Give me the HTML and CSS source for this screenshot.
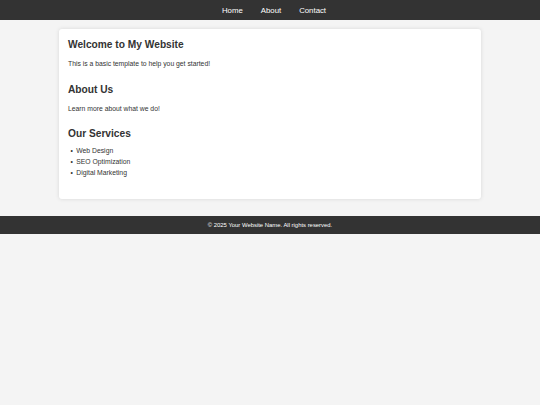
FILE: index.html
```html
<!DOCTYPE html>
<html lang="en">
<head>
    <meta charset="UTF-8">
    <meta name="viewport" content="width=device-width, initial-scale=1.0">
    <title>My Website</title>
    <link rel="stylesheet" href="styles.css">
</head>
<body>

    <header class="topbar">
        <nav class="nav">
            <a href="#">Home</a>
            <a href="#">About</a>
            <a href="#">Contact</a>
        </nav>
    </header>

    <main class="container">
        <section class="card">
            <h2>Welcome to My Website</h2>
            <p>This is a basic template to help you get started!</p>

            <h2>About Us</h2>
            <p>Learn more about what we do!</p>

            <h2>Our Services</h2>
            <ul>
                <li>Web Design</li>
                <li>SEO Optimization</li>
                <li>Digital Marketing</li>
            </ul>
        </section>
    </main>

    <footer class="footer">
        &copy; 2025 Your Website Name. All rights reserved.
    </footer>

</body>
</html>
```

FILE: styles.css
```css
body {
    font-family: 'Liberation Sans', Arial, sans-serif;
    margin: 0;
    padding: 0;
    background-color: #f4f4f4;
    color: #333;
    font-size: 6.8px;
    line-height: 11px;
}

.topbar {
    background-color: #333;
    height: 20px;
}

.nav {
    display: flex;
    justify-content: center;
    align-items: center;
    gap: 18px;
    height: 100%;
    padding-left: 8px;
}

.nav a {
    color: #fff;
    text-decoration: none;
    font-size: 7.8px;
}

.container {
    padding: 9px 59px 17px;
}

.card {
    background-color: #fff;
    padding: 10px 9px;
    border-radius: 3px;
    box-shadow: 0 0 4px rgba(0, 0, 0, 0.12);
}

.card h2 {
    font-size: 10.2px;
    line-height: 1.2;
    margin: 14.5px 0 3px;
}

.card h2:first-child {
    margin-top: 0;
}

.card p {
    margin: 7px 0;
}

.card ul {
    list-style: none;
    margin: 4px 0 11px;
    padding-left: 2.5px;
}

.card li::before {
    content: "\2022";
    display: inline-block;
    width: 5.8px;
}

.footer {
    background-color: #333;
    color: #fff;
    text-align: center;
    font-size: 5.9px;
    height: 18px;
    line-height: 18px;
}
```
